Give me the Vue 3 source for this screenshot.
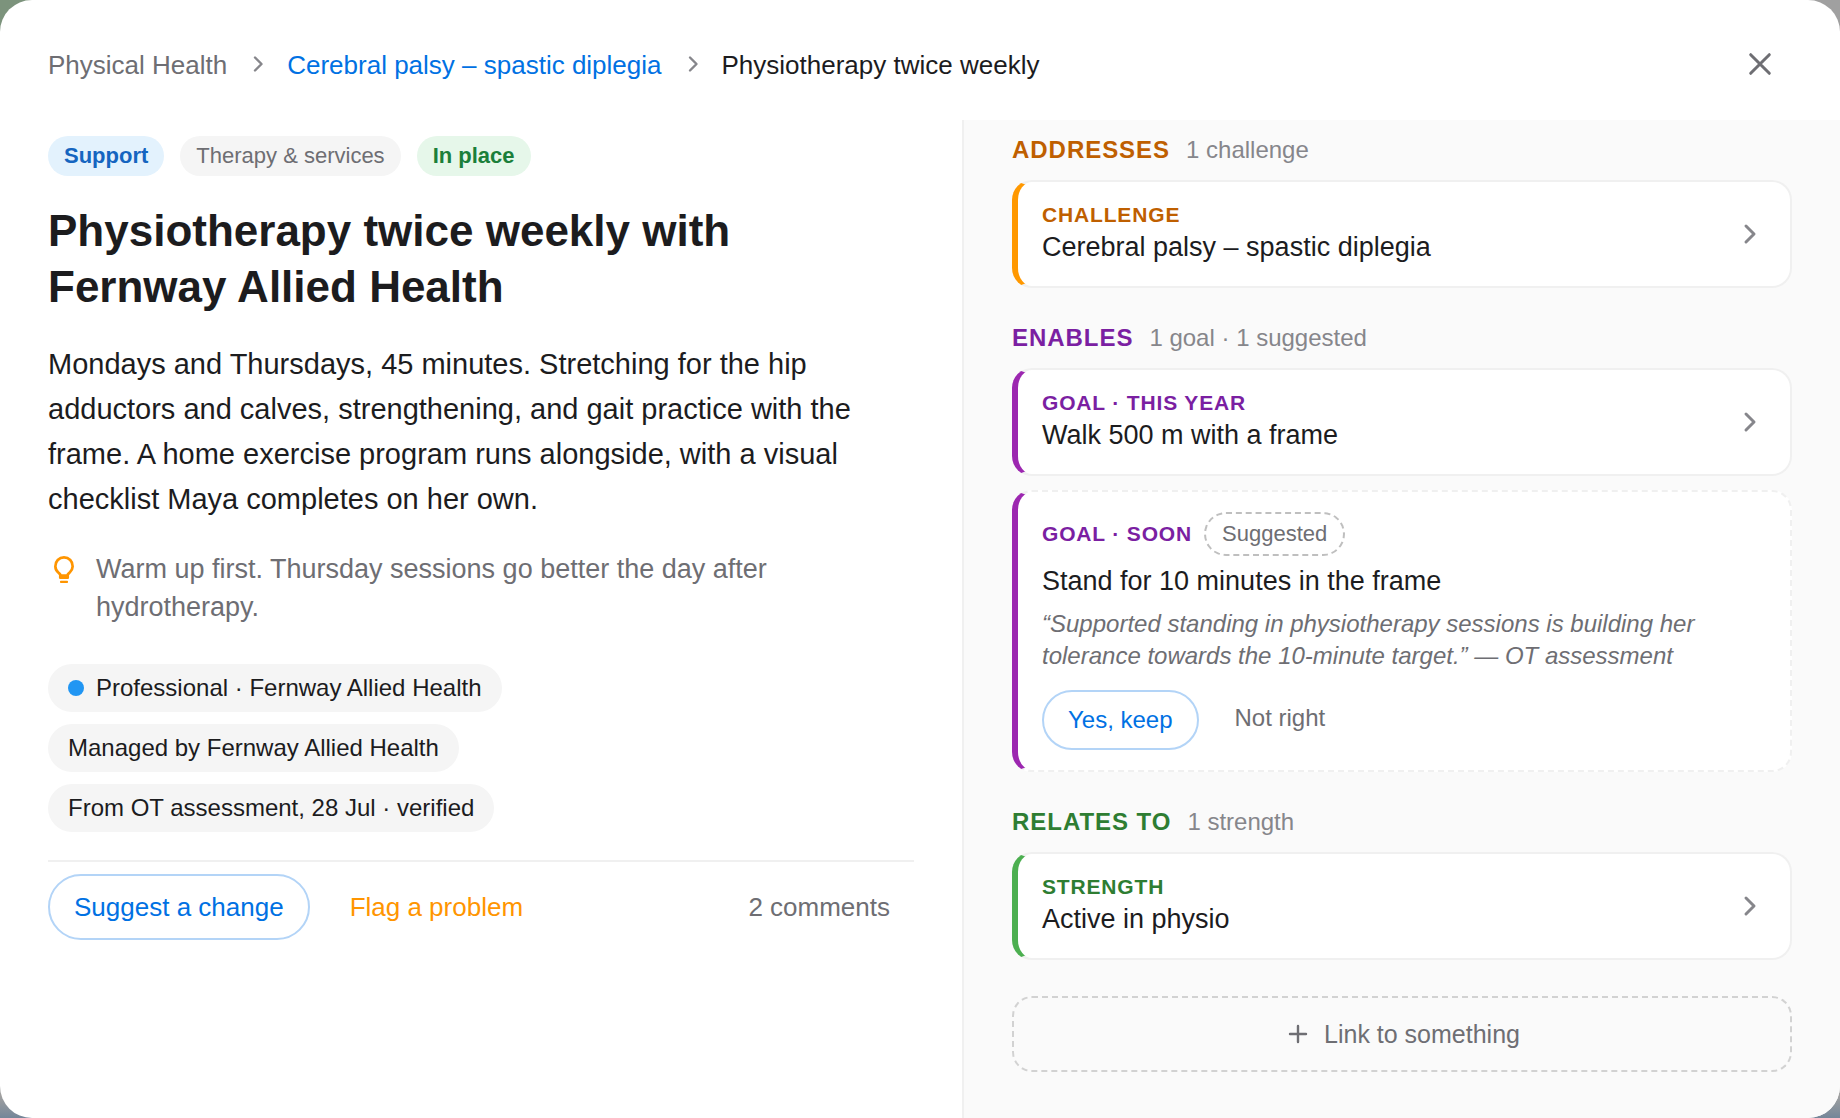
<script setup>
const tags = [
  { text: 'Support', tone: 'blue' },
  { text: 'Therapy & services', tone: 'plain' },
  { text: 'In place', tone: 'green' },
]

const facts = [
  { text: 'Professional · Fernway Allied Health', dot: true },
  { text: 'Managed by Fernway Allied Health' },
  { text: 'From OT assessment, 28 Jul · verified' },
]

const sections = [
  {
    name: 'Addresses',
    count: '1 challenge',
    tone: 'orange',
    items: [{ kind: 'Challenge', title: 'Cerebral palsy – spastic diplegia' }],
  },
  {
    name: 'Enables',
    count: '1 goal · 1 suggested',
    tone: 'purple',
    items: [
      { kind: 'Goal · This year', title: 'Walk 500 m with a frame' },
      {
        kind: 'Goal · Soon',
        title: 'Stand for 10 minutes in the frame',
        suggested: true,
        quote:
          '“Supported standing in physiotherapy sessions is building her tolerance towards the 10-minute target.” — OT assessment',
      },
    ],
  },
  {
    name: 'Relates to',
    count: '1 strength',
    tone: 'green',
    items: [{ kind: 'Strength', title: 'Active in physio' }],
  },
]
</script>

<template>
  <div class="backdrop">
    <main class="dialog" role="dialog" aria-labelledby="dialog-title">
      <header class="bar">
        <nav class="crumbs" aria-label="Breadcrumb">
          <span class="crumb-root">Physical Health</span>
          <svg class="crumb-sep" viewBox="0 0 28 28" aria-hidden="true"><path d="M12 6.5l6.5 6.5-6.5 6.5" /></svg>
          <a href="#">Cerebral palsy – spastic diplegia</a>
          <svg class="crumb-sep" viewBox="0 0 28 28" aria-hidden="true"><path d="M12 6.5l6.5 6.5-6.5 6.5" /></svg>
          <span aria-current="page">Physiotherapy twice weekly</span>
        </nav>
        <button class="close" type="button" aria-label="Close">
          <svg viewBox="0 0 40 40" aria-hidden="true"><path d="M10.7 10.7l18.6 18.6M29.3 10.7L10.7 29.3" /></svg>
        </button>
      </header>

      <div class="columns">
        <article class="detail">
          <div class="tags">
            <span v-for="tag in tags" :key="tag.text" class="tag" :class="'tag-' + tag.tone">{{ tag.text }}</span>
          </div>
          <h1 id="dialog-title">Physiotherapy twice weekly with Fernway Allied Health</h1>
          <p class="body">
            Mondays and Thursdays, 45 minutes. Stretching for the hip adductors and calves, strengthening, and gait
            practice with the frame. A home exercise program runs alongside, with a visual checklist Maya completes on
            her own.
          </p>
          <div class="hint">
            <svg class="bulb" viewBox="0 0 24 24" aria-hidden="true">
              <path class="glass" d="M9.3 16c0-1-.7-1.3-1.6-2.1A6.5 6.5 0 1 1 16.3 13.9c-.9.8-1.6 1.1-1.6 2.1" />
              <path d="M8.2 15.2h7.6v2.6q0 1-1 1H9.2q-1 0-1-1z" />
              <rect x="9" y="20" width="6" height="1.8" rx="0.6" />
            </svg>
            <p>Warm up first. Thursday sessions go better the day after hydrotherapy.</p>
          </div>
          <ul class="facts">
            <li v-for="fact in facts" :key="fact.text">
              <span v-if="fact.dot" class="dot"></span>{{ fact.text }}
            </li>
          </ul>
          <footer class="actions">
            <button class="pill pill-large" type="button">Suggest a change</button>
            <button class="flat flag" type="button">Flag a problem</button>
            <button class="flat comments" type="button">2 comments</button>
          </footer>
        </article>

        <aside class="links">
          <section v-for="section in sections" :key="section.name" :class="'tone-' + section.tone">
            <div class="section-head">
              <h2>{{ section.name }}</h2>
              <span>{{ section.count }}</span>
            </div>
            <div class="cards">
              <template v-for="item in section.items" :key="item.title">
                <div v-if="item.suggested" class="card card-suggested">
                  <div class="kind-row">
                    <span class="kind">{{ item.kind }}</span>
                    <span class="badge">Suggested</span>
                  </div>
                  <p class="title">{{ item.title }}</p>
                  <p class="quote">{{ item.quote }}</p>
                  <div class="choices">
                    <button class="pill" type="button">Yes, keep</button>
                    <button class="flat" type="button">Not right</button>
                  </div>
                </div>
                <button v-else class="card card-link" type="button">
                  <span class="card-text">
                    <span class="kind">{{ item.kind }}</span>
                    <span class="title">{{ item.title }}</span>
                  </span>
                  <svg class="chevron" viewBox="0 0 32 32" aria-hidden="true"><path d="M12 8l8 8-8 8" /></svg>
                </button>
              </template>
            </div>
          </section>
          <button class="add" type="button">
            <svg viewBox="0 0 28 28" aria-hidden="true"><path d="M14 6v16M6 14h16" /></svg>
            Link to something
          </button>
        </aside>
      </div>
    </main>
  </div>
</template>

<style>
body {
  margin: 0;
}
</style>

<style scoped>
.backdrop {
  background:
    linear-gradient(transparent 98%, #748699),
    radial-gradient(circle at top left, #7c937c 30px, #a0a0a0 300px);
  min-height: 100vh;
  display: flex;
  font-family: 'Liberation Sans', Arial, sans-serif;
  color: #1c1c1e;
}

.dialog {
  flex: 1;
  display: flex;
  flex-direction: column;
  background: #fff;
  border-radius: 32px;
  overflow: hidden;
}

h1,
h2,
p,
ul {
  margin: 0;
  padding: 0;
}

button {
  font: inherit;
  color: inherit;
  background: none;
  border: 0;
  margin: 0;
  padding: 0;
  cursor: pointer;
}

svg {
  fill: none;
  stroke: currentColor;
  stroke-width: 3;
  stroke-linecap: round;
  stroke-linejoin: round;
  flex: none;
}

.bar {
  display: flex;
  align-items: center;
  justify-content: space-between;
  padding: 20px 36px 12px 48px;
}

.crumbs {
  display: flex;
  align-items: center;
  gap: 16px;
  padding-top: 2px;
  font-size: 26px;
  line-height: 32px;
}

.crumb-root {
  color: #6e6e73;
}

.crumbs a {
  color: #0071e3;
  text-decoration: none;
}

.crumb-sep {
  width: 28px;
  height: 28px;
  color: #86868b;
  stroke-width: 2.4;
}

.close {
  width: 88px;
  height: 88px;
  display: grid;
  place-items: center;
  color: #6e6e73;
}

.close svg {
  width: 40px;
  height: 40px;
}

.columns {
  flex: 1;
  display: grid;
  grid-template-columns: 481fr 439fr;
}

.detail {
  padding: 16px 48px 48px;
}

.tags {
  display: flex;
  gap: 16px;
}

.tag {
  padding: 0 16px;
  border-radius: 20px;
  font-size: 22px;
  line-height: 40px;
}

.tag-blue {
  background: #e3f2fd;
  color: #1565c0;
  font-weight: bold;
}

.tag-plain {
  background: #f5f5f5;
  color: #6e6e73;
}

.tag-green {
  background: #e6f7ea;
  color: #1b7f3a;
  font-weight: bold;
}

h1 {
  margin-top: 27px;
  font-size: 44px;
  line-height: 56px;
}

.body {
  margin-top: 27px;
  font-size: 29px;
  line-height: 45px;
}

.hint {
  display: flex;
  gap: 16px;
  margin-top: 28px;
  font-size: 27px;
  line-height: 38px;
  color: #6e6e73;
}

.bulb {
  width: 32px;
  height: 32px;
  margin-top: 4px;
  fill: #ff9500;
  stroke: none;
}

.glass {
  fill: none;
  stroke: #ff9500;
  stroke-width: 2;
  stroke-linecap: butt;
}

.facts {
  display: flex;
  flex-direction: column;
  align-items: flex-start;
  gap: 12px;
  margin-top: 38px;
  list-style: none;
}

.facts li {
  display: flex;
  align-items: center;
  gap: 12px;
  padding: 0 20px;
  border-radius: 24px;
  background: #f5f5f5;
  font-size: 24px;
  line-height: 48px;
}

.dot {
  width: 16px;
  height: 16px;
  border-radius: 50%;
  background: #2196f3;
}

.actions {
  display: flex;
  align-items: center;
  gap: 16px;
  margin-top: 28px;
  padding-top: 12px;
  border-top: 2px solid #f0f0f0;
  font-size: 26px;
}

.pill {
  height: 60px;
  padding: 0 24px;
  border: 2px solid #b3d4f7;
  border-radius: 33px;
  color: #0071e3;
}

.pill-large {
  height: 66px;
}

.flat {
  height: 56px;
  padding: 0 24px;
  color: #6e6e73;
}

.flag {
  color: #ff9500;
}

.comments {
  margin-left: auto;
}

.links {
  padding: 16px 48px 46px;
  border-left: 2px solid #f0f0f0;
  background: #fafafa;
}

.tone-orange {
  --ink: #bf5f00;
  --edge: #ff9800;
}

.tone-purple {
  --ink: #7b1fa2;
  --edge: #9c27b0;
}

.tone-green {
  --ink: #2e7d32;
  --edge: #4caf50;
}

.section-head {
  display: flex;
  gap: 16px;
  padding-bottom: 16px;
  font-size: 24px;
  line-height: 28px;
  color: #86868b;
}

h2 {
  font-size: 24px;
  letter-spacing: 0.04em;
  text-transform: uppercase;
  color: var(--ink);
}

section {
  margin-bottom: 36px;
}

.cards {
  display: flex;
  flex-direction: column;
  gap: 14px;
}

.card {
  border: 2px solid #f0f0f0;
  border-left: 6px solid var(--edge);
  border-radius: 20px;
  background: #fff;
  text-align: left;
}

.card-link {
  display: flex;
  align-items: center;
  justify-content: space-between;
  padding: 21px 24px;
}

.card-text {
  display: flex;
  flex-direction: column;
  gap: 3px;
}

.kind {
  font-size: 21px;
  font-weight: bold;
  line-height: 24px;
  letter-spacing: 0.04em;
  text-transform: uppercase;
  color: var(--ink);
}

.title {
  font-size: 27px;
  line-height: 35px;
}

.chevron {
  width: 32px;
  height: 32px;
  color: #86868b;
}

.card-suggested {
  padding: 20px 24px;
  border-top-style: dashed;
  border-right-style: dashed;
  border-bottom-style: dashed;
}

.kind-row {
  display: flex;
  align-items: center;
  gap: 12px;
  margin-bottom: 8px;
}

.badge {
  padding: 0 16px;
  border: 2px dashed #bfbfbf;
  border-radius: 22px;
  font-size: 22px;
  line-height: 40px;
  color: #6e6e73;
}

.quote {
  margin-top: 9px;
  font-size: 24px;
  line-height: 32px;
  font-style: italic;
  color: #6e6e73;
}

.choices {
  display: flex;
  align-items: flex-start;
  gap: 12px;
  margin-top: 18px;
  font-size: 24px;
}

.add {
  display: flex;
  align-items: center;
  justify-content: center;
  gap: 12px;
  width: 100%;
  height: 76px;
  border: 2px dashed #d2d2d2;
  border-radius: 20px;
  font-size: 25px;
  color: #6e6e73;
}

.add svg {
  width: 28px;
  height: 28px;
  stroke-width: 2.4;
}
</style>
